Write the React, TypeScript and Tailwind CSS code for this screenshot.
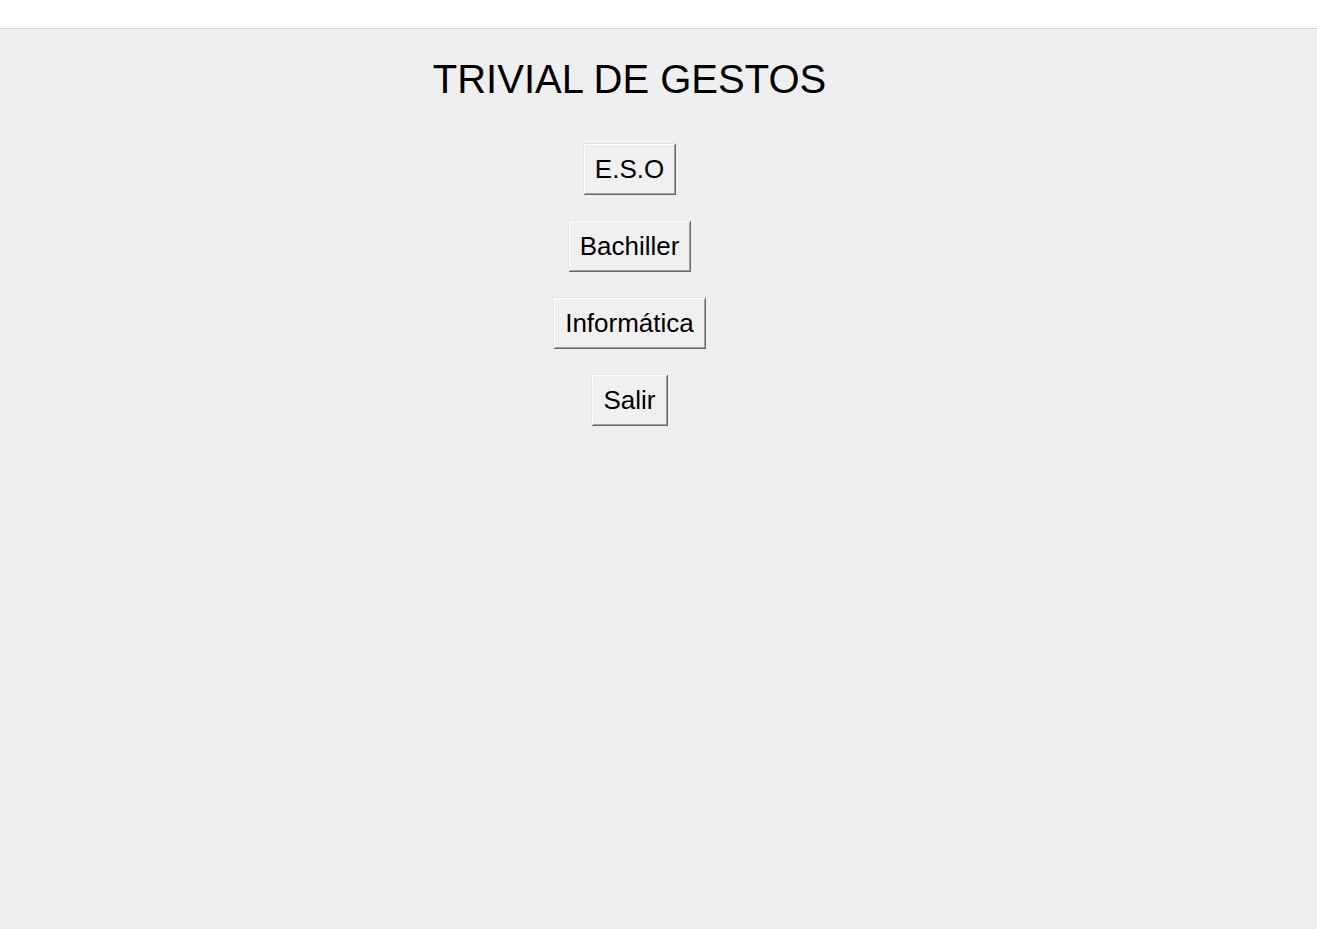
import React from 'react';

const options = ['E.S.O', 'Bachiller', 'Informática', 'Salir'];

const MenuButton: React.FC<{ label: string }> = ({ label }) => (
  <button
    type="button"
    className="h-[52px] px-[12px] bg-[#f0f0f0] text-black text-[26px] leading-[30px] shadow-[inset_1px_1px_0_#e3e3e3,inset_-1px_-1px_0_#696969,inset_2px_2px_0_#ffffff,inset_-2px_-2px_0_#a0a0a0]"
  >
    {label}
  </button>
);

export default function App() {
  return (
    <div className="min-h-[929px] w-full flex flex-col bg-[#efefef] font-['Liberation_Sans',Arial,sans-serif]">
      <div className="h-[29px] bg-white border-b border-[#d6d6d6]" />
      <div className="w-[1259px] flex flex-col items-center pt-[27px]">
        <h1 className="text-[40px] leading-[46px] text-black">TRIVIAL DE GESTOS</h1>
        <div className="mt-[41px] flex flex-col items-center gap-[25px]">
          {options.map((o) => (
            <MenuButton key={o} label={o} />
          ))}
        </div>
      </div>
    </div>
  );
}
